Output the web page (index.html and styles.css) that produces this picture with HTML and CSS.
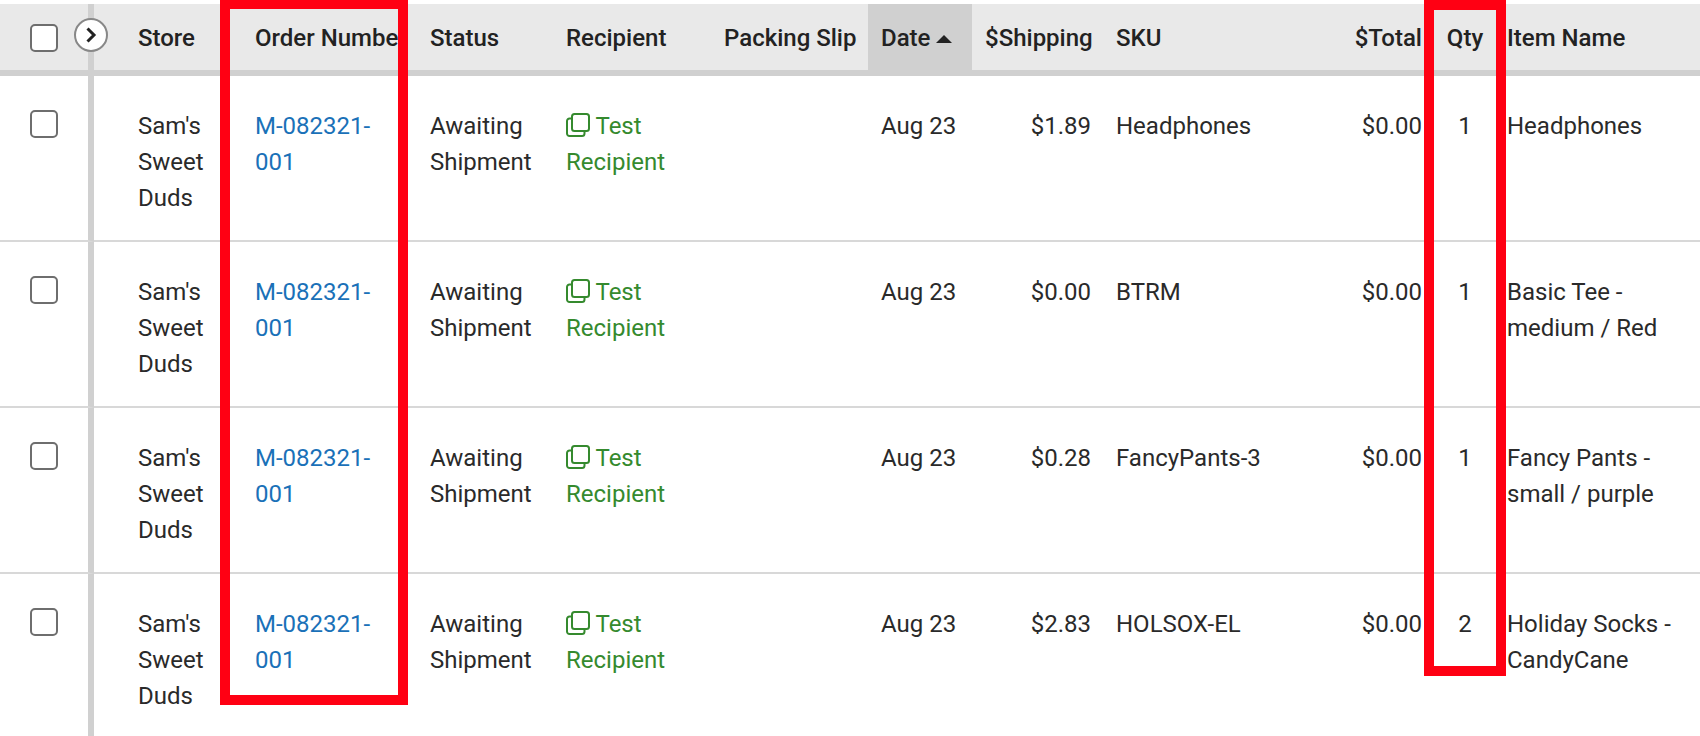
FILE: index.html
```html
<!DOCTYPE html>
<html lang="en">
<head>
  <meta charset="UTF-8" />
  <title>Orders</title>
  <link rel="stylesheet" href="styles.css">
</head>
<body>
  <div class="page">
    <table class="orders">
      <colgroup>
        <col class="col-check">
        <col class="col-store">
        <col class="col-order">
        <col class="col-status">
        <col class="col-recipient">
        <col class="col-packing">
        <col class="col-date">
        <col class="col-shipping">
        <col class="col-sku">
        <col class="col-total">
        <col class="col-qty">
        <col class="col-item">
      </colgroup>
      <thead>
        <tr>
          <th class="check-cell">
            <input type="checkbox" class="check" aria-label="Select all">
            <button class="expand" aria-label="Expand columns">
              <svg width="16" height="16" viewBox="0 0 16 16"><path d="M4.5 1.5 L11 8 L4.5 14.5" fill="none" stroke="#222" stroke-width="3"/></svg>
            </button>
          </th>
          <th class="store">Store</th>
          <th>Order Number</th>
          <th>Status</th>
          <th>Recipient</th>
          <th>Packing Slip</th>
          <th class="sorted">Date <span class="sort-up"></span></th>
          <th class="shipping">$Shipping</th>
          <th>SKU</th>
          <th class="total">$Total</th>
          <th class="center">Qty</th>
          <th class="item">Item Name</th>
        </tr>
      </thead>
      <tbody>
        <tr>
          <td class="check-cell"><input type="checkbox" class="check" aria-label="Select row"></td>
          <td class="store">Sam's Sweet Duds</td>
          <td><a href="#" class="order-link">M-082321-001</a></td>
          <td>Awaiting Shipment</td>
          <td class="recipient"><svg class="copy-icon" width="24" height="24" viewBox="0 0 24 24"><rect x="6" y="1" width="17" height="17" rx="2.5"/><path d="M6 5.5 H3.5 A2.5 2.5 0 0 0 1 8 V20.5 A2.5 2.5 0 0 0 3.5 23 H16 A2.5 2.5 0 0 0 18.5 20.5 V18"/></svg> Test Recipient</td>
          <td></td>
          <td>Aug 23</td>
          <td class="shipping">$1.89</td>
          <td>Headphones</td>
          <td class="total">$0.00</td>
          <td class="center">1</td>
          <td class="item">Headphones</td>
        </tr>
        <tr>
          <td class="check-cell"><input type="checkbox" class="check" aria-label="Select row"></td>
          <td class="store">Sam's Sweet Duds</td>
          <td><a href="#" class="order-link">M-082321-001</a></td>
          <td>Awaiting Shipment</td>
          <td class="recipient"><svg class="copy-icon" width="24" height="24" viewBox="0 0 24 24"><rect x="6" y="1" width="17" height="17" rx="2.5"/><path d="M6 5.5 H3.5 A2.5 2.5 0 0 0 1 8 V20.5 A2.5 2.5 0 0 0 3.5 23 H16 A2.5 2.5 0 0 0 18.5 20.5 V18"/></svg> Test Recipient</td>
          <td></td>
          <td>Aug 23</td>
          <td class="shipping">$0.00</td>
          <td>BTRM</td>
          <td class="total">$0.00</td>
          <td class="center">1</td>
          <td class="item">Basic Tee - medium / Red</td>
        </tr>
        <tr>
          <td class="check-cell"><input type="checkbox" class="check" aria-label="Select row"></td>
          <td class="store">Sam's Sweet Duds</td>
          <td><a href="#" class="order-link">M-082321-001</a></td>
          <td>Awaiting Shipment</td>
          <td class="recipient"><svg class="copy-icon" width="24" height="24" viewBox="0 0 24 24"><rect x="6" y="1" width="17" height="17" rx="2.5"/><path d="M6 5.5 H3.5 A2.5 2.5 0 0 0 1 8 V20.5 A2.5 2.5 0 0 0 3.5 23 H16 A2.5 2.5 0 0 0 18.5 20.5 V18"/></svg> Test Recipient</td>
          <td></td>
          <td>Aug 23</td>
          <td class="shipping">$0.28</td>
          <td>FancyPants-3</td>
          <td class="total">$0.00</td>
          <td class="center">1</td>
          <td class="item">Fancy Pants - small / purple</td>
        </tr>
        <tr>
          <td class="check-cell"><input type="checkbox" class="check" aria-label="Select row"></td>
          <td class="store">Sam's Sweet Duds</td>
          <td><a href="#" class="order-link">M-082321-001</a></td>
          <td>Awaiting Shipment</td>
          <td class="recipient"><svg class="copy-icon" width="24" height="24" viewBox="0 0 24 24"><rect x="6" y="1" width="17" height="17" rx="2.5"/><path d="M6 5.5 H3.5 A2.5 2.5 0 0 0 1 8 V20.5 A2.5 2.5 0 0 0 3.5 23 H16 A2.5 2.5 0 0 0 18.5 20.5 V18"/></svg> Test Recipient</td>
          <td></td>
          <td>Aug 23</td>
          <td class="shipping">$2.83</td>
          <td>HOLSOX-EL</td>
          <td class="total">$0.00</td>
          <td class="center">2</td>
          <td class="item">Holiday Socks - CandyCane</td>
        </tr>
      </tbody>
    </table>

    <!-- red annotation boxes drawn over the screenshot -->
    <div class="callout callout-order"></div>
    <div class="callout callout-qty"></div>
  </div>
</body>
</html>
```

FILE: styles.css
```css
html, body {
  margin: 0;
  padding: 0;
  background: #fff;
}
.page {
  position: relative;
  height: 736px;
  padding-top: 4px;
  box-sizing: border-box;
  overflow: hidden;
  font-family: Roboto, Arial, sans-serif;
  font-size: 24px;
  line-height: 36px;
  color: #2a2a2a;
}
.orders {
  width: 1700px;
  table-layout: fixed;
  border-collapse: separate;
  border-spacing: 0;
}
.col-check { width: 94px; }
.col-store { width: 148px; }
.col-order { width: 175px; }
.col-status { width: 136px; }
.col-recipient { width: 158px; }
.col-packing { width: 157px; }
.col-date { width: 104px; }
.col-shipping { width: 131px; }
.col-sku { width: 197px; }
.col-total { width: 128px; }
.col-qty { width: 72px; }
.col-item { width: 200px; }

th {
  height: 64px;
  padding: 2px 13px 0;
  background-color: #e9e9e9;
  border-bottom: 6px solid #d0d0d0;
  font-weight: 500;
  text-align: left;
  white-space: nowrap;
  color: #222;
}
td {
  padding: 32px 13px 24px;
  border-bottom: 2px solid #d8d8d8;
  vertical-align: top;
}
th.sorted {
  background-color: #d0d0d0;
}
.sort-up {
  display: inline-block;
  margin-left: 0;
  vertical-align: 3px;
  border-left: 8px solid transparent;
  border-right: 8px solid transparent;
  border-bottom: 8px solid #222;
}
th.center, td.center {
  padding-left: 14px;
  padding-right: 12px;
  text-align: center;
}
th.shipping, td.shipping {
  padding-right: 12px;
  text-align: right;
}
th.total, td.total {
  padding-right: 6px;
  text-align: right;
}
th.store, td.store { padding-left: 44px; }
th.item, td.item { padding-left: 7px; padding-right: 8px; }

.check-cell {
  position: relative;
  padding: 0;
  border-right: 6px solid #d0d0d0;
}
td.check-cell {
  padding: 0;
}
.check {
  appearance: none;
  display: block;
  box-sizing: border-box;
  width: 28px;
  height: 28px;
  margin: 34px 0 0 30px;
  background: #fff;
  border: 2px solid #6e6e6e;
  border-radius: 5px;
}
th .check {
  margin-top: 20px;
  margin-bottom: 18px;
}
.expand {
  position: absolute;
  left: 74px;
  top: 14px;
  width: 34px;
  height: 34px;
  padding: 0;
  display: flex;
  align-items: center;
  justify-content: center;
  background: #fff;
  border: 2px solid #888;
  border-radius: 50%;
}
.order-link {
  color: #1a71b8;
  text-decoration: none;
}
.recipient {
  color: #358a2e;
}
.copy-icon {
  vertical-align: -3px;
  fill: none;
  stroke: #358a2e;
  stroke-width: 2;
}
.callout {
  position: absolute;
  box-sizing: border-box;
  border: 10px solid #ff0013;
}
.callout-order {
  left: 220px;
  top: -1px;
  width: 188px;
  height: 706px;
}
.callout-qty {
  left: 1424px;
  top: 0;
  width: 82px;
  height: 676px;
}
```
